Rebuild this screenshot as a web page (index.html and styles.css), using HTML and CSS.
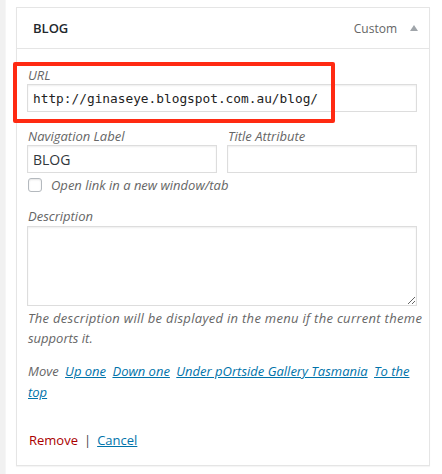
FILE: index.html
```html
<!DOCTYPE html>
<html>
<head>
<meta charset="utf-8">
<link rel="stylesheet" href="styles.css">
</head>
<body>
<div class="page">
  <div class="strip"></div>
  <div class="area">
    <div class="panel">
      <div class="panel-head">
        <span class="item-title">BLOG</span>
        <span class="item-controls">
          <span class="item-type">Custom</span>
          <span class="toggle"></span>
        </span>
      </div>
      <div class="panel-body">
        <div class="field">
          <label class="lbl">URL</label>
          <input class="inp mono" type="text" value="http://ginaseye.blogspot.com.au/blog/">
        </div>
        <div class="row2">
          <div class="field">
            <label class="lbl">Navigation Label</label>
            <input class="inp" type="text" value="BLOG">
          </div>
          <div class="field">
            <label class="lbl">Title Attribute</label>
            <input class="inp" type="text" value="">
          </div>
        </div>
        <label class="check-row"><input class="cb" type="checkbox"><span class="lbl">Open link in a new window/tab</span></label>
        <div class="field desc">
          <label class="lbl">Description</label>
          <textarea class="ta"></textarea>
          <p class="help"><span class="nowrap">The description will be displayed in the menu if the current theme</span><br>supports it.</p>
        </div>
        <p class="move"><span class="move-lbl">Move</span> <a href="#">Up one</a> <a href="#">Down one</a> <a href="#">Under pOrtside Gallery Tasmania</a> <a href="#">To the top</a></p>
        <div class="actions"><a class="remove" href="#">Remove</a><span class="sep">|</span><a class="cancel" href="#">Cancel</a></div>
      </div>
      <div class="annot"></div>
    </div>
  </div>
</div>
</body>
</html>
```

FILE: styles.css
```css
html, body {
  margin: 0;
  padding: 0;
  background: #fff;
}
body {
  font-family: "Open Sans", "Liberation Sans", sans-serif;
  font-size: 13px;
  color: #444;
}
.page {
  display: flex;
  height: 474px;
}
.strip {
  width: 5px;
  background: #f1f1f1;
  border-right: 1px solid #f6f6f6;
}
.area {
  flex: 1;
  padding: 7px 0 0 10px;
}
.panel {
  position: relative;
  width: 414px;
  height: 459px;
  box-sizing: border-box;
  border: 1px solid #e5e5e5;
  box-shadow: 0 1px 1px rgba(0,0,0,0.04);
}
.panel-head {
  height: 40px;
  border-bottom: 1px solid #e5e5e5;
  display: flex;
  align-items: center;
  justify-content: space-between;
  padding: 0 11px 0 16px;
  background: #fff;
}
.item-title {
  font-weight: 600;
  font-size: 13px;
  color: #23282d;
}
.item-controls {
  display: flex;
  align-items: center;
  gap: 13px;
}
.item-type {
  color: #666;
  font-size: 12px;
}
.toggle {
  width: 0;
  height: 0;
  border-left: 4px solid transparent;
  border-right: 4px solid transparent;
  border-bottom: 6px solid #a0a5aa;
  margin-top: -1px;
}
.panel-body {
  padding: 17px 12px 0 10px;
}
.field {
  display: flex;
  flex-direction: column;
}
.lbl {
  font-style: italic;
  color: #666;
  line-height: 18px;
  padding-left: 1px;
}
.inp {
  box-sizing: border-box;
  height: 28px;
  border: 1px solid #ddd;
  box-shadow: inset 0 1px 2px rgba(0,0,0,0.07);
  font-family: "Open Sans", sans-serif;
  font-size: 14px;
  color: #32373c;
  padding: 0 5px;
  margin: 0;
  outline: none;
  width: 100%;
}
.mono {
  font-family: "DejaVu Sans Mono", "Liberation Mono", monospace;
  font-size: 12.8px;
  color: #222;
}
.row2 {
  display: grid;
  grid-template-columns: 190px 190px;
  column-gap: 10px;
  margin-top: 15px;
}
.check-row {
  display: flex;
  align-items: center;
  margin-top: 4px;
  height: 16px;
}
.cb {
  appearance: none;
  -webkit-appearance: none;
  width: 14px;
  height: 14px;
  margin: 0 8px 0 1px;
  border: 1px solid #b4b9be;
  border-radius: 3px;
  background: #fff;
  box-shadow: inset 0 1px 2px rgba(0,0,0,0.1);
  box-sizing: border-box;
}
.desc {
  margin-top: 14px;
}
.ta {
  box-sizing: border-box;
  height: 80px;
  width: 100%;
  border: 1px solid #ddd;
  box-shadow: inset 0 1px 2px rgba(0,0,0,0.07);
  margin: 1px 0 0;
  outline: none;
}
.help {
  margin: 2px 0 0;
  font-style: italic;
  font-size: 13px;
  color: #666;
  line-height: 20px;
  padding-left: 1px;
}
.nowrap {
  white-space: nowrap;
  letter-spacing: 0.3px;
}
.move {
  margin: 13px 0 0;
  font-style: italic;
  line-height: 21px;
  padding-left: 1px;
}
.move-lbl {
  color: #666;
}
.move a {
  color: #0073aa;
  text-decoration: underline;
  margin-left: 3px;
}
.actions {
  margin-top: 27px;
  padding-left: 2px;
  line-height: 20px;
}
.remove {
  color: #a00;
  text-decoration: none;
}
.sep {
  color: #444;
  margin: 0 6px;
}
.cancel {
  color: #0073aa;
  text-decoration: underline;
}
.annot {
  position: absolute;
  left: -4px;
  top: 54px;
  width: 322px;
  height: 61px;
  box-sizing: border-box;
  border: 4px solid #ff2a12;
  border-radius: 2px;
}
```
